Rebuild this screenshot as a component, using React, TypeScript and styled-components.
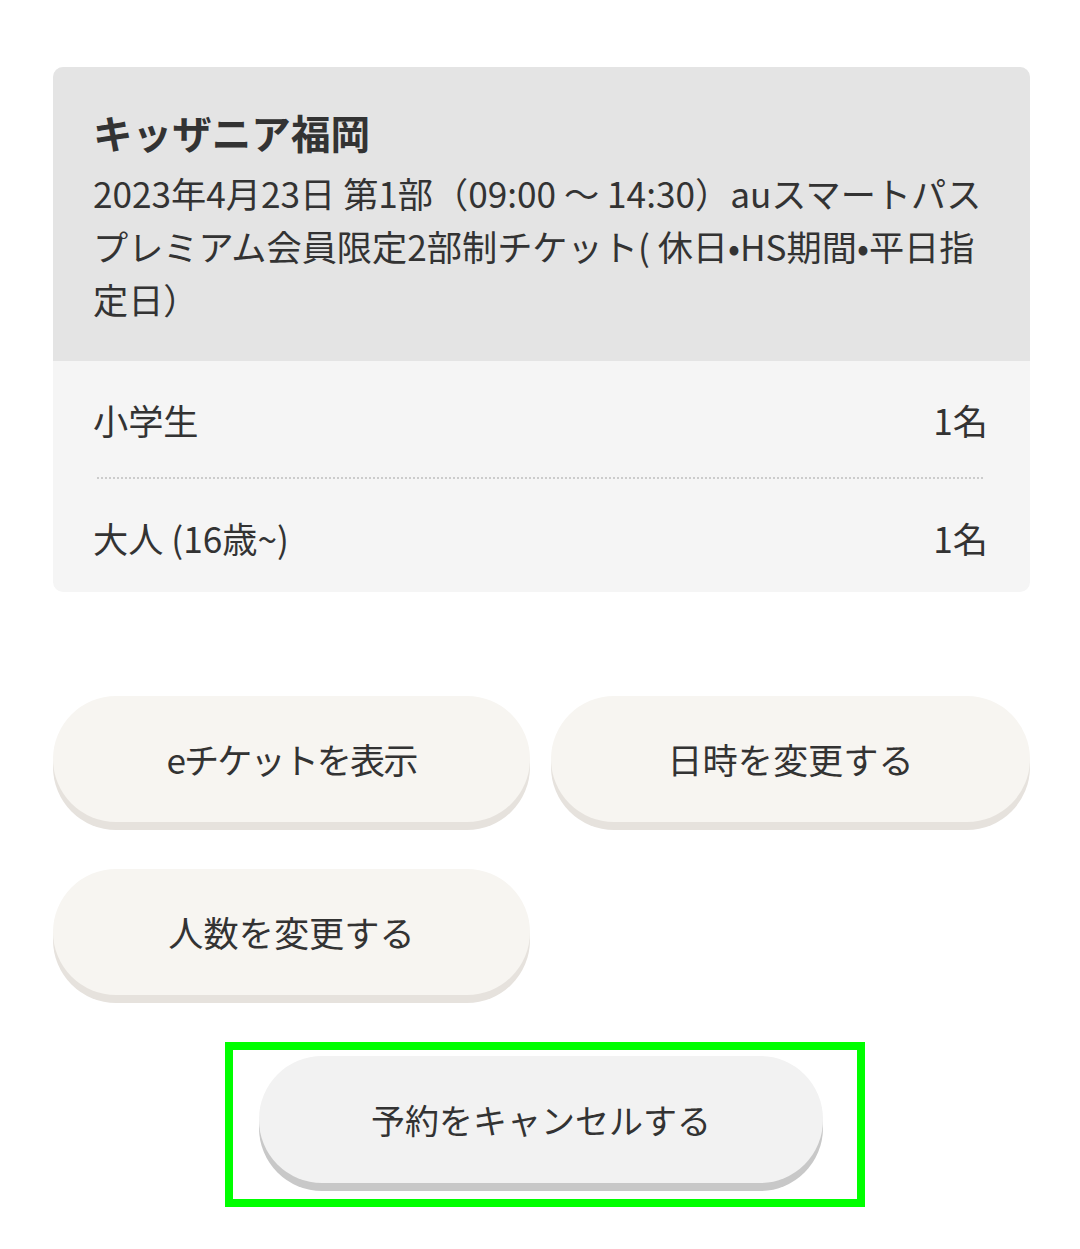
import React from "react";
import styled, { createGlobalStyle } from "styled-components";

const GlobalStyle = createGlobalStyle`
  html, body {
    margin: 0;
    padding: 0;
    background: #ffffff;
  }
  body {
    font-family: "Noto Sans CJK JP", "Noto Sans", sans-serif;
    color: #333333;
  }
`;

const Page = styled.div`
  width: 1080px;
  padding: 67px 50px 40px 53px;
  box-sizing: border-box;
`;

const Card = styled.section`
  border-radius: 10px;
  overflow: hidden;
  background: #f5f5f5;
`;

const CardHeader = styled.div`
  background: #e4e4e4;
  padding: 35px 40px 36px 40px;
`;

const Title = styled.h2`
  margin: 0 0 6px;
  font-size: 39.6px;
  line-height: 59px;
  font-weight: 700;
  color: #333333;
`;

const Detail = styled.p`
  margin: 0;
  font-size: 35.2px;
  line-height: 52.8px;
  color: #333333;
`;

const CountRow = styled.div<{ $last?: boolean }>`
  display: flex;
  justify-content: space-between;
  align-items: center;
  padding: 33px 42px ${(p) => (p.$last ? "27px" : "30px")} 40px;
  font-size: 35.2px;
  line-height: 52.8px;
`;

const Divider = styled.hr`
  margin: 0 47px 0 44px;
  border: 0;
  border-top: 2px dotted #cccccc;
  height: 0;
`;

const ButtonGrid = styled.div`
  display: grid;
  grid-template-columns: 477px 479px;
  column-gap: 21px;
  row-gap: 47px;
  margin-top: 104px;
`;

const PillButton = styled.button<{ $tone?: "beige" | "grey"; $tight?: boolean }>`
  height: 126px;
  border: 0;
  border-radius: 63px;
  font-family: inherit;
  font-size: 35.2px;
  letter-spacing: ${(p) => (p.$tight ? "-2px" : "0")};
  color: #333333;
  cursor: pointer;
  background: ${(p) => (p.$tone === "grey" ? "#f2f2f2" : "#f7f5f1")};
  box-shadow: 0 8px 0 ${(p) => (p.$tone === "grey" ? "#c8c8c8" : "#e6e2dd")};
`;

const Highlight = styled.div`
  width: 640px;
  box-sizing: border-box;
  margin: 47px 0 0 172px;
  border: 8px solid #00ff00;
  padding: 6px 34px 16px 26px;
  display: flex;
`;

const CancelButton = styled(PillButton)`
  width: 564px;
  height: 127px;
  font-size: 34px;
`;

const counts = [
  { label: "小学生", value: "1名" },
  { label: "大人 (16歳~)", value: "1名" },
];

const App: React.FC = () => {
  return (
    <>
      <GlobalStyle />
      <Page>
        <Card>
          <CardHeader>
            <Title>キッザニア福岡</Title>
            <Detail>
              2023年4月23日 第1部（09:00 〜 14:30）auスマートパスプレミアム会員限定2部制チケット( 休日•HS期間•平日指定日）
            </Detail>
          </CardHeader>
          {counts.map((c, i) => (
            <React.Fragment key={c.label}>
              {i > 0 && <Divider />}
              <CountRow $last={i === counts.length - 1}>
                <span>{c.label}</span>
                <span>{c.value}</span>
              </CountRow>
            </React.Fragment>
          ))}
        </Card>

        <ButtonGrid>
          <PillButton type="button" $tight>
            eチケットを表示
          </PillButton>
          <PillButton type="button">日時を変更する</PillButton>
          <PillButton type="button">人数を変更する</PillButton>
        </ButtonGrid>

        <Highlight>
          <CancelButton type="button" $tone="grey">
            予約をキャンセルする
          </CancelButton>
        </Highlight>
      </Page>
    </>
  );
};

export default App;
